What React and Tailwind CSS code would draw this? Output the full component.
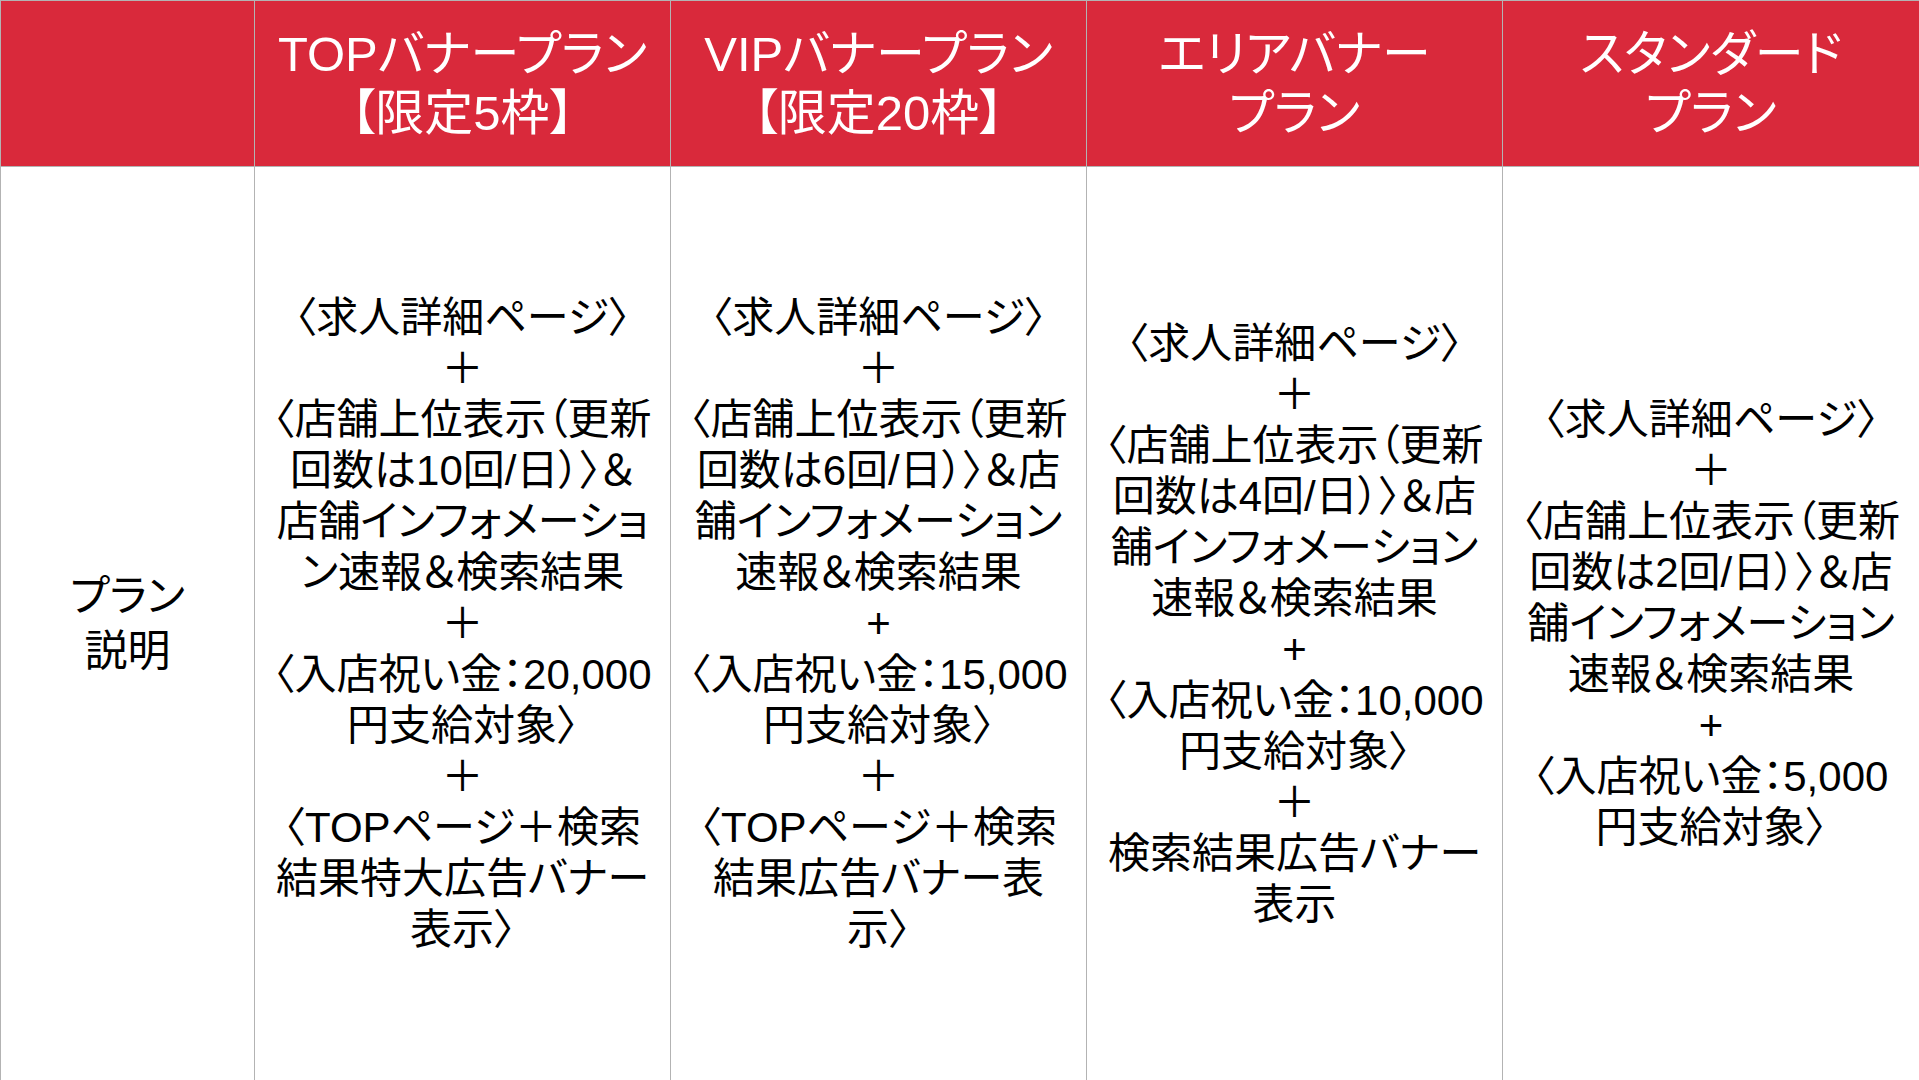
import React from "react";

const headers = [
  ["TOPバナープラン", "【限定5枠】"],
  ["VIPバナープラン", "【限定20枠】"],
  ["エリアバナー", "プラン"],
  ["スタンダード", "プラン"],
];

const bodies = [
  [
    "〈求人詳細ページ〉",
    "＋",
    "〈店舗上位表示（更新",
    "回数は10回/日）〉＆",
    "店舗インフォメーショ",
    "ン速報＆検索結果",
    "＋",
    "〈入店祝い金：20,000",
    "円支給対象〉",
    "＋",
    "〈TOPページ＋検索",
    "結果特大広告バナー",
    "表示〉",
  ],
  [
    "〈求人詳細ページ〉",
    "＋",
    "〈店舗上位表示（更新",
    "回数は6回/日）〉＆店",
    "舗インフォメーション",
    "速報＆検索結果",
    "+",
    "〈入店祝い金：15,000",
    "円支給対象〉",
    "＋",
    "〈TOPページ＋検索",
    "結果広告バナー表",
    "示〉",
  ],
  [
    "〈求人詳細ページ〉",
    "＋",
    "〈店舗上位表示（更新",
    "回数は4回/日）〉＆店",
    "舗インフォメーション",
    "速報＆検索結果",
    "+",
    "〈入店祝い金：10,000",
    "円支給対象〉",
    "＋",
    "検索結果広告バナー",
    "表示",
  ],
  [
    "〈求人詳細ページ〉",
    "＋",
    "〈店舗上位表示（更新",
    "回数は2回/日）〉＆店",
    "舗インフォメーション",
    "速報＆検索結果",
    "+",
    "〈入店祝い金：5,000",
    "円支給対象〉",
  ],
];

export default function App() {
  return (
    <div className="w-[1919px] h-[1080px] overflow-hidden bg-white font-['Liberation_Sans','Noto_Sans_CJK_JP',sans-serif] [font-feature-settings:'palt']">
      <div className="grid h-full grid-cols-[254px_repeat(4,1fr)] grid-rows-[166px_1fr] border-l border-t border-[#b3b3b3]">
        <div className="bg-[#d9293b] border-r border-b border-[#b3b3b3]" />
        {headers.map((h, i) => (
          <div
            key={i}
            className={`bg-[#d9293b] border-b border-[#b3b3b3] flex flex-col items-center justify-center text-white text-[49px] leading-[59px] whitespace-nowrap ${i < 3 ? "border-r" : ""}`}
          >
            <div>{h[0]}</div>
            <div>{h[1]}</div>
          </div>
        ))}
        <div className="border-r border-[#b3b3b3] flex flex-col items-center justify-center text-black text-[43px] leading-[55px] whitespace-nowrap">
          <div>プラン</div>
          <div>説明</div>
        </div>
        {bodies.map((lines, i) => (
          <div
            key={i}
            className={`border-[#b3b3b3] flex flex-col items-center justify-center text-black text-[42px] leading-[51px] whitespace-nowrap ${i < 3 ? "border-r" : ""}`}
          >
            {lines.map((l, j) => (
              <div key={j}>{l}</div>
            ))}
          </div>
        ))}
      </div>
    </div>
  );
}
